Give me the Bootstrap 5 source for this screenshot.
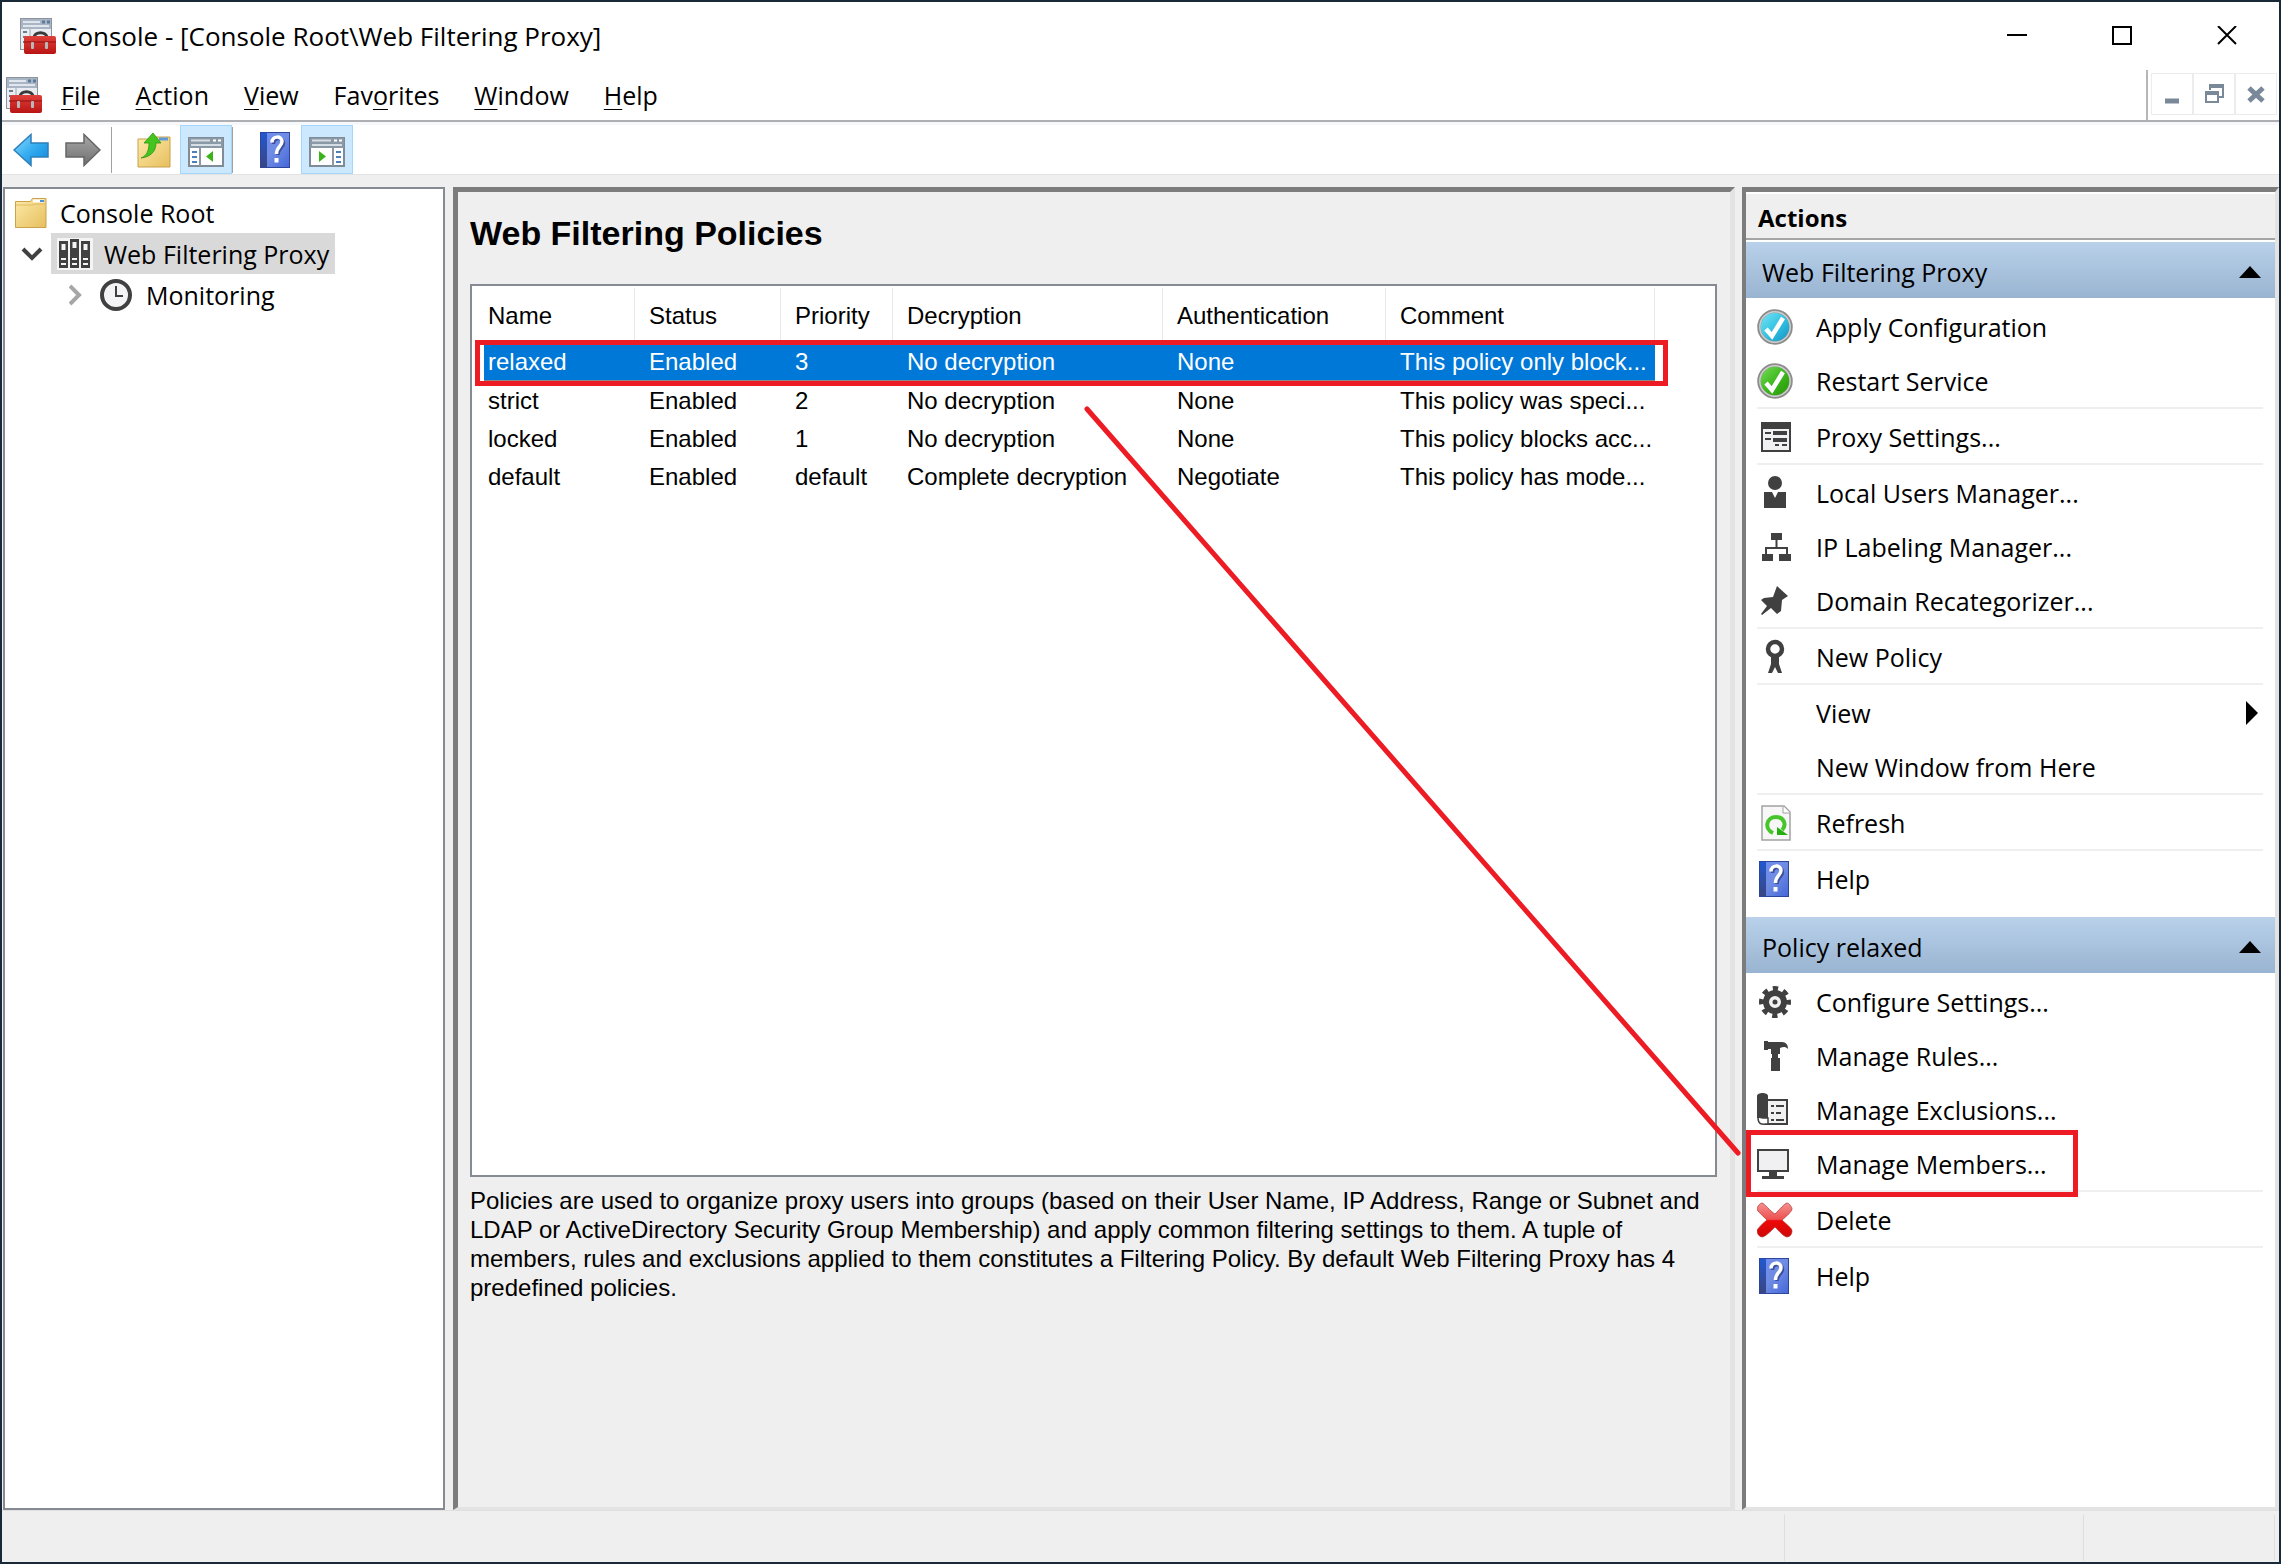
<!DOCTYPE html>
<html lang="en">
<head>
<meta charset="utf-8">
<meta name="viewport" content="width=device-width, initial-scale=1">
<title>Console - [Console Root\Web Filtering Proxy]</title>
<link href="https://cdn.jsdelivr.net/npm/bootstrap@5.3.0/dist/css/bootstrap.min.css" rel="stylesheet">
<style>
  body { font-family: "Open Sans", "Noto Sans", sans-serif; font-size: 25px; line-height: 34px; color: #000; background: #efefef; }
  button { font: inherit; color: inherit; background: none; border: 0; padding: 0; }
  svg { display: block; flex: none; }
  u { text-underline-offset: 4px; text-decoration-thickness: 1px; }
  .console-window { border: 2px solid #1a2937; }
  .title-bar { height: 68px; padding-left: 18px; }
  .title-text { font-size: 26px; font-weight: 400; line-height: 34px; padding-left: 5px; }
  .caption-btn { width: 105px; height: 68px; }
  .menu-bar { height: 50px; }
  .menu-list { padding-left: 4px; gap: 19px; }
  .menu-items { gap: 35px; }
  .menu-edge { border-bottom: 2px solid #adafb2; }
  .mdi-controls { border-left: 2px solid #b4b6ba; padding: 3px 2px 3px 3px; }
  .mdi-btn { width: 42px; height: 42px; border: 1px solid #ececec; }
  .tool-bar { height: 53px; border-top: 3px solid #f7f8fb; border-bottom: 1px solid #e3e3e3; padding-left: 11px; }
  .tool-btn { width: 52px; height: 49px; }
  .tool-arrow { width: 36px; margin-right: 16px; }
  .tool-btn.pressed { background: #cce8ff; border: 1px solid #a5d6fb; }
  .tool-rule { width: 1px; height: 46px; background: #a0a0a0; }
  .tool-gap { margin: 0 16px 0 10px; }
  .main-area { padding: 12px 0 0 1px; }
  .tree-pane { width: 442px; margin-right: 8px; background: #fff; border: 2px solid #858a93; padding-top: 3px; }
  .tree-row { height: 41px; }
  .tree-label { height: 41px; padding: 0 6px; gap: 11px; }
  .tree-label.top-label { gap: 13px; }
  .tree-label.current { background: #d9d9d9; }
  .sunken { border-style: solid; border-color: #7c7c7c #e3e3e3 #e3e3e3 #7c7c7c; border-width: 5px 3px 3px 5px; }
  .policy-pane { margin-right: 7px; padding: 21px 13px 0 12px; border-right-width: 5px; }
  .policy-title { font: bold 34px/40px "Liberation Sans", Arial, sans-serif; margin: 0 0 31px; }
  .sans-text { font-family: "Liberation Sans", Arial, sans-serif; font-size: 24px; }
  .policy-list { background: #fff; border: 2px solid #858a93; padding: 2px 0 0 12px; }
  .policy-grid { width: 1171px; table-layout: fixed; line-height: 38px; border-collapse: separate; border-spacing: 0; }
  .policy-grid th { font-weight: 400; height: 56px; padding: 0 0 0 14px; border-right: 1px solid #e8e8e8; }
  .policy-grid td { height: 38px; padding: 0 0 0 14px; white-space: nowrap; }
  .policy-grid th:first-child, .policy-grid td:first-child { padding-left: 4px; }
  .policy-grid .chosen td { background: #0078d7; color: #fff; line-height: 36px; border-bottom: 2px solid #888; }
  .policy-note { height: 330px; padding-top: 9px; line-height: 29px; margin: 0; }
  .actions-pane { width: 537px; background: #fff; border-width: 5px 4px 3px 4px; }
  .actions-head { height: 46px; margin: 2px 0; font-weight: 700; font-size: 24px; background: #efefef; border-bottom: 2px solid #a5a5a5; padding: 4px 0 0 12px; }
  .group-head { height: 56px; background: linear-gradient(#b9d1ea, #99b4d1); padding: 3px 14px 0 16px; margin-bottom: 1px; width: 100%; }
  .action-row { height: 54px; padding: 2px 17px 0 11px; gap: 23px; width: 100%; text-align: left; }
  .action-rule { height: 2px; margin: 0 12px 0 11px; background: #efefef; border: 0; opacity: 1; }
  .group-gap { margin-bottom: 12px; }
  .status-bar { height: 52px; border-top: 1px solid #e0e0e0; padding: 4px 4px 1px 0; }
  .status-cell { border-right: 1px solid #dedede; }
  .callouts { left: 0; top: 0; pointer-events: none; }
</style>
<script src="https://cdn.jsdelivr.net/npm/bootstrap@5.3.0/dist/js/bootstrap.bundle.min.js"></script>
</head>
<body>
<svg width="0" height="0" class="position-absolute" aria-hidden="true">
  <defs>
    <linearGradient id="gBlue" x1="0" y1="0" x2="1" y2="1"><stop offset="0" stop-color="#8fdcff"/><stop offset=".5" stop-color="#35adf0"/><stop offset="1" stop-color="#0c84dc"/></linearGradient>
    <linearGradient id="gGray" x1="0" y1="0" x2="0" y2="1"><stop offset="0" stop-color="#a8a8a8"/><stop offset="1" stop-color="#6f6f6f"/></linearGradient>
    <linearGradient id="gFolder" x1="0" y1="0" x2="1" y2="1"><stop offset="0" stop-color="#fdeaa8"/><stop offset="1" stop-color="#e6bf5e"/></linearGradient>
    <linearGradient id="gBook" x1="0" y1="0" x2="1" y2="1"><stop offset="0" stop-color="#6f8cf0"/><stop offset=".5" stop-color="#6f8ce4"/><stop offset="1" stop-color="#4466d8"/></linearGradient>
    <linearGradient id="gSpine" x1="0" y1="0" x2="0" y2="1"><stop offset="0" stop-color="#2258d0"/><stop offset="1" stop-color="#3a4680"/></linearGradient>
    <linearGradient id="gRed" x1="0" y1="0" x2="0" y2="1"><stop offset="0" stop-color="#e0403a"/><stop offset="1" stop-color="#b81414"/></linearGradient>
    <linearGradient id="gCyan" x1="0" y1="0" x2="1" y2="1"><stop offset="0" stop-color="#7fe6f4"/><stop offset=".5" stop-color="#35c4e4"/><stop offset="1" stop-color="#0f8cc0"/></linearGradient>
    <linearGradient id="gGreen" x1="0" y1="0" x2="1" y2="1"><stop offset="0" stop-color="#7be05c"/><stop offset=".5" stop-color="#3fb81e"/><stop offset="1" stop-color="#229400"/></linearGradient>
    <linearGradient id="gDel" x1="0" y1="0" x2="0" y2="1"><stop offset="0" stop-color="#f49090"/><stop offset=".48" stop-color="#ee5050"/><stop offset=".52" stop-color="#ee0808"/><stop offset="1" stop-color="#d00808"/></linearGradient>
  </defs>
  <symbol id="i-console" viewBox="0 0 36 36">
    <rect x=".5" y=".5" width="31" height="31" fill="#e9edf2" stroke="#8b949d"/>
    <rect x="1" y="1" width="30" height="10" fill="#a9b5c4"/><path d="M3 4h17M3 8h26" stroke="#dfe6ee" stroke-width="2"/><path d="M22 4h3M27 4h3" stroke="#5f7a9c" stroke-width="3"/>
    <path d="M3 14h4M3 19h4M3 24h4" stroke="#6a7c90" stroke-width="2"/><path d="M10 11v20" stroke="#9aa6b2"/>
    <path d="M14 20c0-7 13-7 13 0" fill="none" stroke="#3a3a3a" stroke-width="3"/>
    <rect x="4" y="18" width="32" height="18" rx="2" fill="url(#gRed)"/><path d="M4 24h32" stroke="#8f1010" stroke-width="1"/>
    <rect x="11" y="24" width="3" height="7" rx="1" fill="#b8b8b8"/><rect x="25" y="24" width="3" height="7" rx="1" fill="#b8b8b8"/>
  </symbol>
  <symbol id="i-back" viewBox="0 0 36 34"><path d="M1 17 18 1.500V10h17v14H18v8.500z" fill="url(#gBlue)" stroke="#2f7fb8" stroke-width="1.500"/></symbol>
  <symbol id="i-forward" viewBox="0 0 36 34"><path d="M35 17 19 1.500V10H1v14h18v8.500z" fill="url(#gGray)" stroke="#666" stroke-width="1.500"/></symbol>
  <symbol id="i-folder" viewBox="0 0 32 32"><path d="M.5 4.500h15l2-3H31v29H.5z" fill="url(#gFolder)" stroke="#cba14c"/><path d="M18 4h11" stroke="#fff" stroke-width="3"/><path d="M25 4h4" stroke="#4a90d8" stroke-width="2"/><path d="M1 8h17l2-1h11" fill="none" stroke="#e0bb63"/></symbol>
  <symbol id="i-up" viewBox="0 0 34 36"><path d="M1 7h14l2-2h16v30H1z" fill="url(#gFolder)" stroke="#cba14c"/><path d="M22 7h9" stroke="#5c9ad8" stroke-width="3"/><path d="M4 26c6-2 8-8 8-15H7L16 1l8 10h-5c0 9-6 14-15 15z" fill="#43c41f" stroke="#2d9612" stroke-width=".8"/></symbol>
  <symbol id="i-tree" viewBox="0 0 36 30"><rect x="1" y="1" width="34" height="28" fill="#fff" stroke="#7f8b96" stroke-width="2"/><rect x="1" y="1" width="34" height="10" fill="#8b98a5"/><path d="M3 3.500h19M3 8h30" stroke="#d5dde5" stroke-width="2"/><path d="M25 3.500h3M30 3.500h3" stroke="#fff" stroke-width="2"/><path d="M12 11v18" stroke="#8b98a5" stroke-width="2"/><path d="M4 15h5M4 20h5M4 25h5" stroke="#4c80b8" stroke-width="2"/><path d="M25 14v11l-7-5.500z" fill="#3ab41a"/></symbol>
  <symbol id="i-pane" viewBox="0 0 36 30"><rect x="1" y="1" width="34" height="28" fill="#fff" stroke="#7f8b96" stroke-width="2"/><rect x="1" y="1" width="34" height="10" fill="#8b98a5"/><path d="M3 3.500h19M3 8h30" stroke="#d5dde5" stroke-width="2"/><path d="M25 3.500h3M30 3.500h3" stroke="#fff" stroke-width="2"/><path d="M24 11v18" stroke="#8b98a5" stroke-width="2"/><path d="M27 15h5M27 20h5M27 25h5" stroke="#4c80b8" stroke-width="2"/><path d="M10 14v11l7-5.500z" fill="#3ab41a"/></symbol>
  <symbol id="i-help" viewBox="0 0 30 36"><rect x=".5" y=".5" width="29" height="35" fill="url(#gBook)" stroke="#2d469c"/><rect x="1" y="1" width="6" height="34" fill="url(#gSpine)"/><path d="M12.500 11c0-7 10-7 10-1 0 5-5.500 5-5.500 12" fill="none" stroke="#3c4f9a" stroke-width="3.500" transform="translate(1 1)"/><path d="M12 10.500c0-7 10-7 10-1 0 5-5.500 5-5.500 12.500" fill="none" stroke="#fff" stroke-width="3.500"/><rect x="14.500" y="26" width="4" height="4.500" fill="#fff"/></symbol>
  <symbol id="i-books" viewBox="0 0 36 32"><rect width="36" height="32" fill="#f4f4f4"/><path d="M2 3h9v27H2zM13 1h9v29h-9zM24 3h9v27h-9z" fill="#404040"/><path d="M4.500 6h4v6h-4zM15.500 4h4v6h-4zM26.500 6h4v6h-4zM4 20h5v2H4zM15 20h5v2h-5zM26 20h5v2h-5zM4 25h5v2H4zM15 25h5v2h-5zM26 25h5v2h-5z" fill="#f4f4f4"/></symbol>
  <symbol id="i-clock" viewBox="0 0 34 34"><circle cx="17" cy="17" r="14" fill="#f4f4f6" stroke="#404040" stroke-width="4"/><path d="M17 8v10h7" fill="none" stroke="#404040" stroke-width="2"/></symbol>
  <symbol id="i-ok-cyan" viewBox="0 0 36 36"><circle cx="18" cy="18" r="16" fill="url(#gCyan)" stroke="#8c8c8c" stroke-width="3.500"/><circle cx="18" cy="18" r="15.200" fill="none" stroke="#cfcfcf" stroke-width="1.500"/><path d="M9 20l6 7L26 9" fill="none" stroke="#fff" stroke-width="4.500"/></symbol>
  <symbol id="i-ok-green" viewBox="0 0 36 36"><circle cx="18" cy="18" r="16" fill="url(#gGreen)" stroke="#8c8c8c" stroke-width="3.500"/><circle cx="18" cy="18" r="15.200" fill="none" stroke="#cfcfcf" stroke-width="1.500"/><path d="M9 20l6 7L26 9" fill="none" stroke="#fff" stroke-width="4.500"/></symbol>
  <symbol id="i-form" viewBox="0 0 36 36"><rect x="5" y="4" width="28" height="28" fill="#f1f1f3" stroke="#404040" stroke-width="2"/><path d="M4 3h30v7H4z" fill="#404040"/><path d="M8 14h6M8 20h6M18 26h4M25 26h5" stroke="#404040" stroke-width="2"/><path d="M16 14h14M16 21h14" stroke="#404040" stroke-width="4"/></symbol>
  <symbol id="i-user" viewBox="0 0 36 36"><circle cx="18" cy="8" r="7" fill="#404040"/><path d="M7 17h8l3 6 3-6h8v16H7z" fill="#404040"/></symbol>
  <symbol id="i-net" viewBox="0 0 36 36"><path d="M14 4h11v7H14zM5 25h11v7H5zM22 25h12v7H22z" fill="#404040"/><path d="M19.500 11v8M9 25v-6h21v6" fill="none" stroke="#404040" stroke-width="2"/></symbol>
  <symbol id="i-pin" viewBox="0 0 36 36"><path d="M20 3 31 13l-6 4-1 11-4 3-6-6-9 7-1-1 6-8-6-6 3-2 9-1z" fill="#404040"/></symbol>
  <symbol id="i-ribbon" viewBox="0 0 36 36"><circle cx="18" cy="10" r="7" fill="#fff" stroke="#404040" stroke-width="4.500"/><path d="M14 18h8v7l3 9h-4l-3-6-3 6h-4l3-9z" fill="#404040"/></symbol>
  <symbol id="i-refresh" viewBox="0 0 36 36"><path d="M5 1h22l6 6v28H5z" fill="#f7f7f7" stroke="#a2a2a2" stroke-width="1.500"/><path d="M26 1v7h7" fill="#fff" stroke="#a2a2a2"/><path d="M16 28c-9-4-7-16 3-16 8 0 11 8 6 13" fill="none" stroke="#49c52c" stroke-width="4"/><path d="M20 22v8h11z" fill="#25b010"/></symbol>
  <symbol id="i-help-l" viewBox="0 0 36 36"><use href="#i-help" x="2" width="30" height="36"/></symbol>
  <symbol id="i-gear" viewBox="0 0 36 36"><circle cx="18" cy="18" r="13.500" fill="none" stroke="#404040" stroke-width="5" stroke-dasharray="5.300 5.300" stroke-dashoffset="2.600"/><circle cx="18" cy="18" r="9" fill="#f2f2f2" stroke="#404040" stroke-width="6"/><circle cx="18" cy="18" r="2.500" fill="#404040"/></symbol>
  <symbol id="i-hammer" viewBox="0 0 36 36"><path d="M7 3h4v1h14c4 0 6 3 6 7-3-3-5-2-8-1v6h-9v-5h-3v1H7z" fill="#404040"/><path d="M15 16h6v4h2v13h-9V20h1z" fill="#404040"/></symbol>
  <symbol id="i-scroll" viewBox="0 0 36 36"><rect x="8" y="8" width="22" height="24" fill="#f2f2f3" stroke="#404040" stroke-width="2"/><path d="M0 4c0-4 11-4 11 0v22H0z" fill="#404040"/><path d="M1 25c0 9 5 7 10 7v-6H6z" fill="#fff" stroke="#404040" stroke-width="1.500"/><path d="M14 14h3M19 14h8M14 21h3M19 21h5M14 28h3M19 28h8" stroke="#404040" stroke-width="2"/></symbol>
  <symbol id="i-screen" viewBox="0 0 36 36"><rect x="1" y="4" width="30" height="21" fill="#f0f0f2" stroke="#404040" stroke-width="2"/><path d="M12 25h8v5h7v3H5v-3h7z" fill="#404040"/></symbol>
  <symbol id="i-delete" viewBox="0 0 36 36"><path d="M5 1c2 0 8 8 13 11C22 8 28 1 30 1s5 4 5 6-6 8-10 11c4 4 10 8 10 11s-2 6-5 6-8-6-12-10C14 29 8 35 5 35s-5-4-5-6 6-8 10-11C6 14 0 9 0 7s3-6 5-6z" fill="url(#gDel)" stroke="#b03030" stroke-width=".7"/></symbol>
</svg>

<div class="console-window vh-100 d-flex flex-column position-relative overflow-hidden">
  <header class="bg-white">
    <div class="title-bar d-flex align-items-center">
      <svg width="36" height="36"><use href="#i-console"/></svg>
      <h1 class="title-text mb-0 me-auto">Console - [Console Root\Web Filtering Proxy]</h1>
      <button class="caption-btn d-flex align-items-center justify-content-center" aria-label="Minimize"><svg width="20" height="20"><path d="M0 9h20" stroke="#000" stroke-width="2"/></svg></button>
      <button class="caption-btn d-flex align-items-center justify-content-center" aria-label="Maximize"><svg width="20" height="20"><rect x="1" y="1" width="18" height="17" fill="none" stroke="#000" stroke-width="2"/></svg></button>
      <button class="caption-btn d-flex align-items-center justify-content-center" aria-label="Close"><svg width="20" height="20"><path d="M1 0l18 18M19 0 1 18" stroke="#000" stroke-width="2"/></svg></button>
    </div>
    <div class="menu-edge d-flex">
      <nav class="menu-bar menu-list d-flex align-items-center me-auto">
        <svg width="36" height="36"><use href="#i-console"/></svg>
        <div class="menu-items d-flex">
          <button><u>F</u>ile</button><button><u>A</u>ction</button><button><u>V</u>iew</button><button>Fav<u>o</u>rites</button><button><u>W</u>indow</button><button><u>H</u>elp</button>
        </div>
      </nav>
      <div class="mdi-controls d-flex">
        <button class="mdi-btn d-flex align-items-center justify-content-center" aria-label="Minimize child"><svg width="20" height="20"><path d="M3 17h14" stroke="#7a8999" stroke-width="5"/></svg></button>
        <button class="mdi-btn d-flex align-items-center justify-content-center" aria-label="Restore child"><svg width="20" height="20"><path d="M6 1h13v12h-4M6 1v5" fill="none" stroke="#7a8999" stroke-width="2"/><path d="M5 0h15v4H5z" fill="#7a8999"/><rect x="2" y="8" width="12" height="10" fill="#fff" stroke="#7a8999" stroke-width="2"/><path d="M1 7h14v4H1z" fill="#7a8999"/></svg></button>
        <button class="mdi-btn d-flex align-items-center justify-content-center" aria-label="Close child"><svg width="20" height="20"><path d="M3 4l14 13M17 4 3 17" stroke="#7a8999" stroke-width="5"/></svg></button>
      </div>
    </div>
    <div class="tool-bar d-flex align-items-center">
      <button class="tool-arrow" aria-label="Back"><svg width="36" height="34"><use href="#i-back"/></svg></button>
      <button class="tool-arrow me-0" aria-label="Forward"><svg width="36" height="34"><use href="#i-forward"/></svg></button>
      <span class="tool-rule tool-gap"></span>
      <button class="tool-btn d-flex align-items-center justify-content-center" aria-label="Up one level"><svg width="34" height="36"><use href="#i-up"/></svg></button>
      <button class="tool-btn pressed d-flex align-items-center justify-content-center" aria-label="Show console tree"><svg class="mt-1" width="36" height="30"><use href="#i-tree"/></svg></button>
      <span class="tool-rule me-3"></span>
      <button class="tool-btn d-flex align-items-center justify-content-center" aria-label="Help"><svg width="30" height="36"><use href="#i-help"/></svg></button>
      <button class="tool-btn pressed d-flex align-items-center justify-content-center" aria-label="Show action pane"><svg class="mt-1" width="36" height="30"><use href="#i-pane"/></svg></button>
    </div>
  </header>

  <main class="main-area d-flex flex-fill">
    <aside class="tree-pane flex-shrink-0">
      <div class="tree-row d-flex ps-1"><button class="tree-label top-label d-flex align-items-center"><svg width="32" height="32"><use href="#i-folder"/></svg>Console Root</button></div>
      <div class="tree-row d-flex align-items-center">
        <svg class="ms-3 me-2" width="22" height="16"><path d="M2 3l9 9 9-9" fill="none" stroke="#404040" stroke-width="4"/></svg>
        <button class="tree-label current d-flex align-items-center"><svg width="36" height="32"><use href="#i-books"/></svg>Web Filtering Proxy</button>
      </div>
      <div class="tree-row d-flex align-items-center ps-5">
        <svg class="ms-3 me-2" width="16" height="22"><path d="M1 2l9 9-9 9" fill="none" stroke="#a6a6a6" stroke-width="4"/></svg>
        <button class="tree-label top-label d-flex align-items-center"><svg width="34" height="34"><use href="#i-clock"/></svg>Monitoring</button>
      </div>
    </aside>

    <section class="policy-pane sunken flex-fill d-flex flex-column">
      <h2 class="policy-title">Web Filtering Policies</h2>
      <div class="policy-list sans-text flex-fill">
        <table class="policy-grid">
          <colgroup><col style="width:151px"><col style="width:146px"><col style="width:112px"><col style="width:270px"><col style="width:223px"><col></colgroup>
          <thead><tr><th>Name</th><th>Status</th><th>Priority</th><th>Decryption</th><th>Authentication</th><th>Comment</th></tr></thead>
          <tbody>
            <tr class="chosen"><td>relaxed</td><td>Enabled</td><td>3</td><td>No decryption</td><td>None</td><td>This policy only block...</td></tr>
            <tr><td>strict</td><td>Enabled</td><td>2</td><td>No decryption</td><td>None</td><td>This policy was speci...</td></tr>
            <tr><td>locked</td><td>Enabled</td><td>1</td><td>No decryption</td><td>None</td><td>This policy blocks acc...</td></tr>
            <tr><td>default</td><td>Enabled</td><td>default</td><td>Complete decryption</td><td>Negotiate</td><td>This policy has mode...</td></tr>
          </tbody>
        </table>
      </div>
      <p class="policy-note sans-text text-nowrap">Policies are used to organize proxy users into groups (based on their User Name, IP Address, Range or Subnet and<br>LDAP or ActiveDirectory Security Group Membership) and apply common filtering settings to them. A tuple of<br>members, rules and exclusions applied to them constitutes a Filtering Policy. By default Web Filtering Proxy has 4<br>predefined policies.</p>
    </section>

    <aside class="actions-pane sunken flex-shrink-0">
      <div class="actions-head d-flex align-items-center">Actions</div>
      <button class="group-head d-flex align-items-center justify-content-between">Web Filtering Proxy<svg width="22" height="12"><path d="M11 0l11 12H0z"/></svg></button>
      <button class="action-row d-flex align-items-center"><svg width="36" height="36"><use href="#i-ok-cyan"/></svg>Apply Configuration</button>
      <button class="action-row d-flex align-items-center"><svg width="36" height="36"><use href="#i-ok-green"/></svg>Restart Service</button>
      <hr class="action-rule">
      <button class="action-row d-flex align-items-center"><svg width="36" height="36"><use href="#i-form"/></svg>Proxy Settings...</button>
      <hr class="action-rule">
      <button class="action-row d-flex align-items-center"><svg width="36" height="36"><use href="#i-user"/></svg>Local Users Manager...</button>
      <button class="action-row d-flex align-items-center"><svg width="36" height="36"><use href="#i-net"/></svg>IP Labeling Manager...</button>
      <button class="action-row d-flex align-items-center"><svg width="36" height="36"><use href="#i-pin"/></svg>Domain Recategorizer...</button>
      <hr class="action-rule">
      <button class="action-row d-flex align-items-center"><svg width="36" height="36"><use href="#i-ribbon"/></svg>New Policy</button>
      <hr class="action-rule">
      <button class="action-row d-flex align-items-center"><svg width="36" height="36"></svg>View<svg class="ms-auto" width="12" height="24"><path d="M0 0l12 12L0 24z"/></svg></button>
      <button class="action-row d-flex align-items-center"><svg width="36" height="36"></svg>New Window from Here</button>
      <hr class="action-rule">
      <button class="action-row d-flex align-items-center"><svg width="36" height="36"><use href="#i-refresh"/></svg>Refresh</button>
      <hr class="action-rule">
      <button class="action-row group-gap d-flex align-items-center"><svg width="36" height="36"><use href="#i-help-l"/></svg>Help</button>
      <button class="group-head d-flex align-items-center justify-content-between">Policy relaxed<svg width="22" height="12"><path d="M11 0l11 12H0z"/></svg></button>
      <button class="action-row d-flex align-items-center"><svg width="36" height="36"><use href="#i-gear"/></svg>Configure Settings...</button>
      <button class="action-row d-flex align-items-center"><svg width="36" height="36"><use href="#i-hammer"/></svg>Manage Rules...</button>
      <button class="action-row d-flex align-items-center"><svg width="36" height="36"><use href="#i-scroll"/></svg>Manage Exclusions...</button>
      <button class="action-row d-flex align-items-center"><svg width="36" height="36"><use href="#i-screen"/></svg>Manage Members...</button>
      <hr class="action-rule">
      <button class="action-row d-flex align-items-center"><svg width="36" height="36"><use href="#i-delete"/></svg>Delete</button>
      <hr class="action-rule">
      <button class="action-row d-flex align-items-center"><svg width="36" height="36"><use href="#i-help-l"/></svg>Help</button>
    </aside>
  </main>

  <footer class="status-bar d-flex">
    <div class="status-cell flex-fill"></div>
    <div class="status-cell" style="width:299px"></div>
    <div class="status-cell" style="width:191px"></div>
  </footer>

  <!-- Callouts linking the selected policy to its Manage Members action -->
  <svg class="callouts position-absolute" width="2277" height="1560" viewBox="2 2 2277 1560" fill="none" stroke="#ed1c24" stroke-width="5">
    <rect x="477.500" y="342.500" width="1188" height="41"/>
    <rect x="1748.500" y="1132.500" width="327" height="62"/>
    <path d="M1087 409 1738 1153" stroke-linecap="round"/>
  </svg>
</div>
</body>
</html>
